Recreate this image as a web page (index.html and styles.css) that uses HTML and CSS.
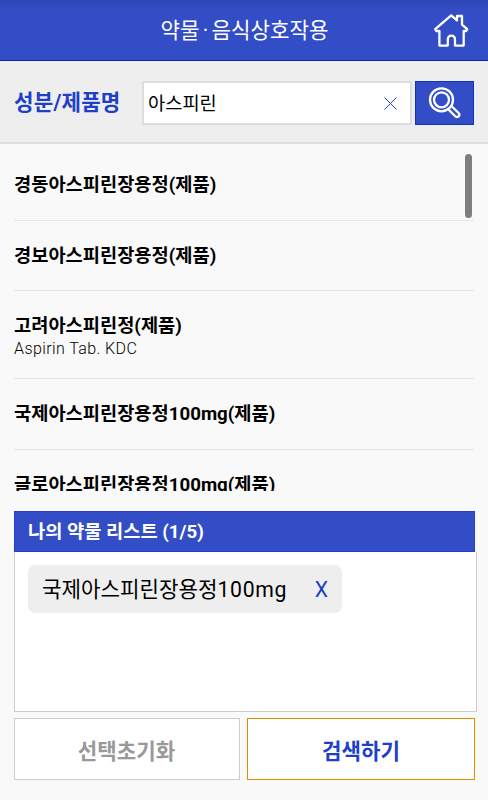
FILE: index.html
```html
<!DOCTYPE html>
<html lang="ko">
<head>
<meta charset="UTF-8" />
<title>약물·음식상호작용</title>
<link rel="stylesheet" href="styles.css">
</head>
<body>

	<div class="header">
		<h1 class="title">약물<span class="dot">·</span>음식상호작용</h1>
		<a class="home" href="#">
			<svg width="36" height="36" viewBox="0 0 36 36">
				<path d="M2.2 16.2 18.2 2.4l5.8 5V3h5v8.6l5.2 4.6-1 1.8h-2.5v14.6H22V27c0-2.8-1.4-4.4-3.6-4.4s-3.6 1.6-3.6 4.4v5.6H6.4V18H3.4z" />
			</svg>
		</a>
	</div>

	<div class="search">
		<label class="label" for="keyword">성분/제품명</label>
		<div class="field">
			<input type="text" id="keyword" class="textfield" value="아스피린" />
			<svg class="clear" width="13" height="13" viewBox="0 0 13 13">
				<path d="M.5.5l12 12M12.5.5l-12 12" />
			</svg>
		</div>
		<button type="button" class="search-btn">
			<svg width="34" height="34" viewBox="0 0 34 34">
				<circle cx="13.5" cy="13.8" r="11.5" />
				<circle cx="13.5" cy="13.8" r="7.5" />
				<path d="M20.4 23.4l6.8 6.9a2.35 2.35 0 0 0 3.4-3.3l-7.2-7" />
			</svg>
		</button>
	</div>

	<div class="result">
		<ul class="list">
			<li>경동아스피린장용정(제품)</li>
			<li>경보아스피린장용정(제품)</li>
			<li>고려아스피린정(제품)<span class="sub">Aspirin Tab. KDC</span></li>
			<li>국제아스피린장용정100mg(제품)</li>
			<li>글로아스피린장용정100mg(제품)</li>
		</ul>
		<div class="scrollbar"></div>
	</div>

	<div class="mylist">
		<h2 class="mylist-title">나의 약물 리스트 (1/5)</h2>
		<div class="mylist-box">
			<div class="chip">
				<span>국제아스피린장용정<span class="dose">100mg</span></span>
				<a class="del" href="#">X</a>
			</div>
		</div>
	</div>

	<div class="btns">
		<button type="button" class="btn reset">선택초기화</button>
		<button type="button" class="btn submit">검색하기</button>
	</div>

</body>
</html>
```
FILE: styles.css
```css
* {
	box-sizing: border-box;
}
body {
	margin: 0;
	height: 800px;
	overflow: hidden;
	background-color: #f9f9f9;
	color: #000;
	font-family: Roboto, "Noto Sans CJK KR", sans-serif;
	font-size: 18.7px;
}
h1, h2, ul {
	margin: 0;
	padding: 0;
}
ul {
	list-style: none;
}
a {
	text-decoration: none;
}
svg {
	display: block;
	fill: none;
}
input, button {
	padding: 0;
	border-radius: 0;
	font-family: inherit;
}
.header {
	position: relative;
	height: 61px;
	border-bottom: 1px solid #0723b8;
	background: linear-gradient(#2e46b5, #324dc5 10px);
}
.title {
	padding-left: 1px;
	color: #fff;
	font-size: 21.2px;
	font-weight: normal;
	line-height: 61px;
	text-align: center;
}
.dot {
	display: inline-block;
	width: 12px;
}
.home {
	position: absolute;
	top: 13px;
	right: 19px;
}
.home path {
	stroke: #fff;
	stroke-width: 2.3;
	stroke-linejoin: round;
}
.search {
	display: flex;
	height: 83px;
	padding: 20px 14px 0;
	border-bottom: 2px solid #ddd;
	background-color: #eee;
}
.label {
	width: 128px;
	color: #1e3fc8;
	font-size: 21.2px;
	font-weight: bold;
	letter-spacing: .2px;
	line-height: 43px;
}
.field {
	display: flex;
	align-items: center;
	width: 270px;
	height: 44px;
	padding: 0 13px 0 4px;
	border: 2px solid #ddd;
	background-color: #fff;
}
.textfield {
	flex: 1;
	min-width: 0;
	padding-bottom: 3px;
	border: 0;
	outline: 0;
	font-size: 18.7px;
}
.clear path {
	stroke: #2444d8;
	stroke-width: 1;
}
.search-btn {
	width: 59px;
	height: 44px;
	margin-left: 3px;
	padding-left: 12px;
	border: 1px solid #1233bd;
	background-color: #324dc5;
}
.search-btn svg {
	stroke: #fff;
	stroke-width: 2.3;
	stroke-linecap: round;
}
.result {
	position: relative;
	height: 347px;
	padding: 6px 14px 0;
	overflow: hidden;
}
.list li {
	height: 70.6px;
	padding-top: 21px;
	border-bottom: 1px solid #e6e6e6;
	font-weight: bold;
	line-height: 28px;
}
.list li:nth-child(3) {
	height: 88px;
}
.sub {
	display: block;
	margin-top: -1px;
	font-size: 16px;
	font-weight: 300;
	letter-spacing: .4px;
	line-height: 20px;
}
.scrollbar {
	position: absolute;
	top: 10px;
	right: 16px;
	width: 7px;
	height: 64px;
	border-radius: 4px;
	background-color: #7e7e7e;
}
.mylist {
	width: 463px;
	margin: 20px 0 0 14px;
}
.mylist-title {
	width: 461px;
	height: 41px;
	padding-left: 13px;
	border: 1px solid #2340c4;
	background-color: #324dc5;
	color: #fff;
	font-size: 18.7px;
	line-height: 41px;
}
.mylist-box {
	height: 160px;
	padding: 13px;
	border: 1px solid #ccc;
	border-top: 0;
	background-color: #fff;
}
.chip {
	display: flex;
	justify-content: space-between;
	width: 314px;
	height: 48px;
	padding: 0 14px;
	border-radius: 7px;
	background-color: #eee;
	font-size: 21.2px;
	line-height: 49px;
}
.dose {
	letter-spacing: .7px;
}
.del {
	color: #1e3fc8;
}
.btns {
	display: flex;
	gap: 7px;
	margin: 6px 13px 0 14px;
}
.btn {
	height: 62px;
	padding-top: 1px;
	border: 1px solid #ccc;
	background-color: #fff;
	font-size: 21.2px;
	font-weight: bold;
}
.reset {
	width: 226px;
	padding-right: 1px;
	color: #999;
}
.submit {
	width: 228px;
	border-color: #e68a00;
	color: #1e3fc8;
}
```
